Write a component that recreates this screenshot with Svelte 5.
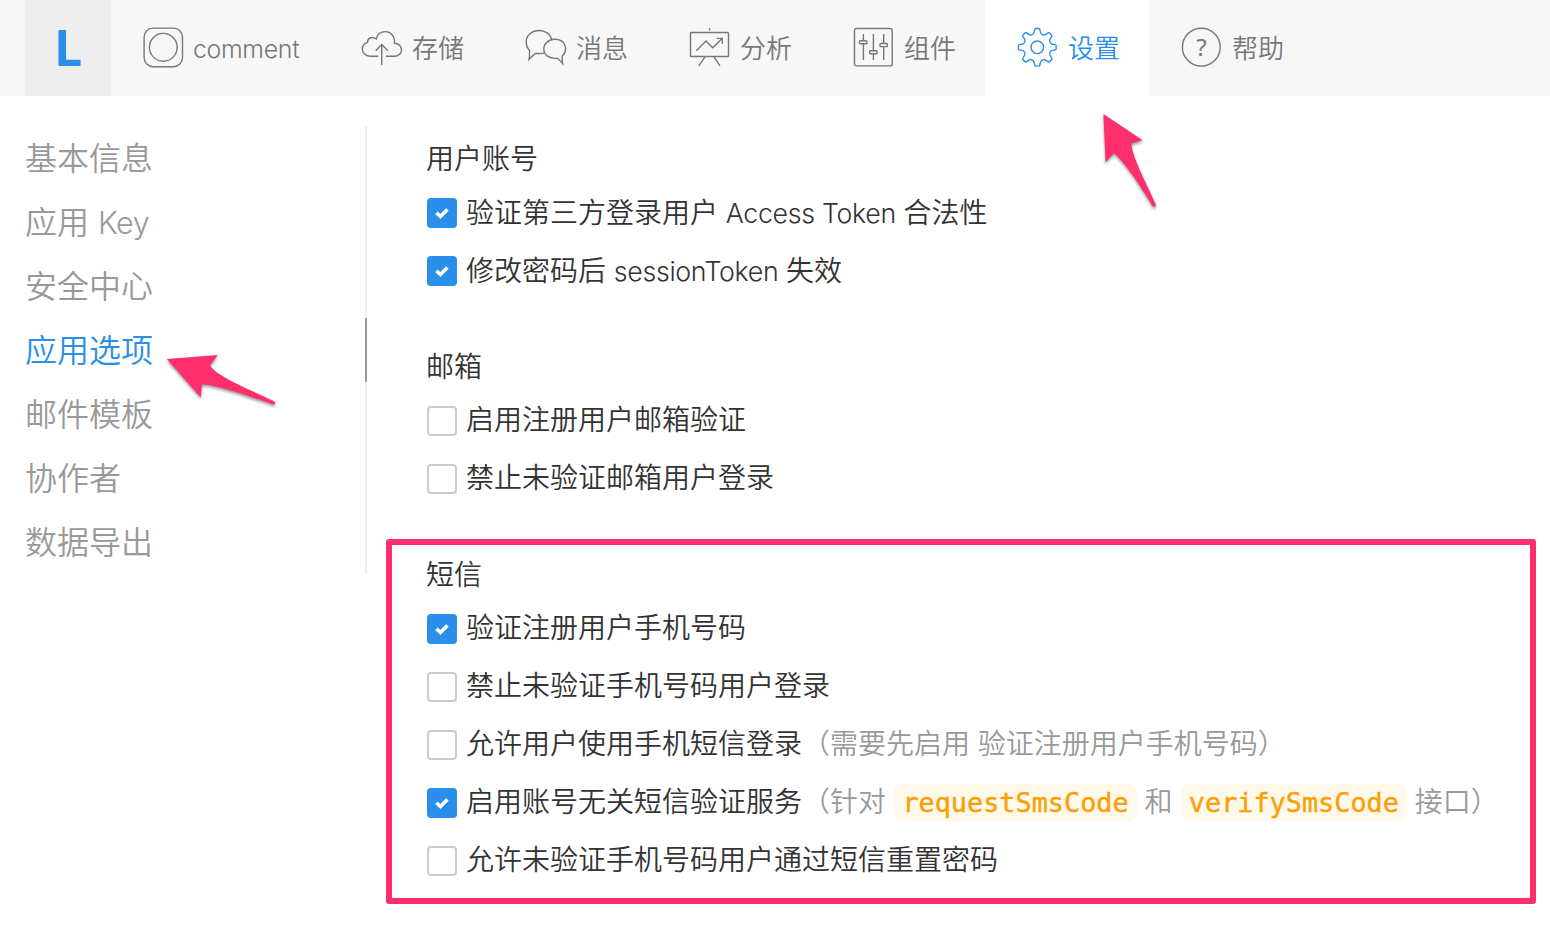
<script>
  const tabs = [
    { icon: 'app', label: 'comment' },
    { icon: 'cloud', label: '存储' },
    { icon: 'chat', label: '消息' },
    { icon: 'board', label: '分析' },
    { icon: 'sliders', label: '组件' },
    { icon: 'gear', label: '设置', active: true },
    { icon: 'help', label: '帮助' },
  ];

  const menu = ['基本信息', '应用 Key', '安全中心', '应用选项', '邮件模板', '协作者', '数据导出'];
  const current = '应用选项';

  const groups = [
    {
      title: '用户账号',
      options: [
        { on: true, label: '验证第三方登录用户 Access Token 合法性' },
        { on: true, label: '修改密码后 sessionToken 失效' },
      ],
    },
    {
      title: '邮箱',
      options: [
        { on: false, label: '启用注册用户邮箱验证' },
        { on: false, label: '禁止未验证邮箱用户登录' },
      ],
    },
    {
      title: '短信',
      options: [
        { on: true, label: '验证注册用户手机号码' },
        { on: false, label: '禁止未验证手机号码用户登录' },
        { on: false, label: '允许用户使用手机短信登录', note: [{ t: '（需要先启用 验证注册用户手机号码）' }] },
        {
          on: true,
          label: '启用账号无关短信验证服务',
          note: [
            { t: '（针对 ' },
            { t: 'requestSmsCode', code: true },
            { t: ' 和 ' },
            { t: 'verifySmsCode', code: true },
            { t: ' 接口）' },
          ],
        },
        { on: false, label: '允许未验证手机号码用户通过短信重置密码' },
      ],
    },
  ];

  // Splits a label into Latin and CJK runs; odd entries are Latin
  const runs = (s) => s.split(/([A-Za-z]+(?: [A-Za-z]+)*)/);

  // Eight-toothed gear outline centred on (20.3, 20.3)
  function gearPath() {
    const c = 20.3;
    const at = (r, deg) => {
      const a = (deg * Math.PI) / 180;
      return `${(c + r * Math.sin(a)).toFixed(2)} ${(c - r * Math.cos(a)).toFixed(2)}`;
    };
    let d = '';
    for (let i = 0; i < 8; i++) {
      const m = i * 45;
      d += `${i ? 'L' : 'M'}${at(18.4, m - 7.6)}Q${at(19, m - 6.8)} ${at(18.9, m - 5)}`;
      d += `L${at(18.9, m + 5)}Q${at(19, m + 6.8)} ${at(18.4, m + 7.6)}`;
      d += `L${at(15.6, m + 11.5)}Q${at(13.6, m + 14)} ${at(13.7, m + 22.5)}`;
      d += `Q${at(13.6, m + 31)} ${at(15.6, m + 33.5)}`;
    }
    return d + 'Z';
  }
</script>

{#snippet mixed(s)}{#each runs(s) as run, i}{#if i % 2}<span class="latin">{run}</span>{:else}{run}{/if}{/each}{/snippet}

<div class="page">
  <header>
    <div class="logo">L</div>
    <nav>
      {#each tabs as tab}
        <div class="tab" class:active={tab.active}>
          <svg class="icon" width="42" height="42" viewBox="0 0 42 42">
            {#if tab.icon === 'app'}
              <rect x="1.1" y="1.1" width="38.4" height="38.6" rx="9" />
              <circle cx="20.3" cy="20.3" r="13.9" />
            {:else if tab.icon === 'cloud'}
              <path d="M17.3 29.2H9C4.6 29.2 1.4 25.9 1.4 22.2C1.4 18.9 3.5 16.3 6.5 15.4C6.5 10.6 12 9 15.2 12C16.2 7.4 19.8 4.6 24.3 4.6C29.6 4.6 34.2 9 33.4 16.2C37.2 16.4 40.5 18.9 40.5 22.8C40.5 26.4 37.6 29.2 34 29.2H25" />
              <path d="M20.7 38V17.6M14.7 23.7L20.7 17.5L27 23.7" />
            {:else if tab.icon === 'chat'}
              <path d="M26.7 12.2C25.3 7 20.3 3.5 14.2 3.5C6.9 3.5 1.2 8.3 1.2 14.6C1.2 18.2 2.3 21.2 4.6 23.5C4.6 27 4.5 30 4.1 32.4C6.3 30 8.3 27.4 11 26.5C14 26.3 16.5 27.1 19.2 26.2" />
              <path d="M37.2 29.2C43.3 23.5 41.1 12.3 29.8 12.3C23.2 12.3 18.8 16.8 18.8 22C18.8 27.8 24 32 32.1 31.3C34.5 32.4 36 34.6 37.6 36.6C37.2 34 37.2 31.6 37.2 29.2Z" />
            {:else if tab.icon === 'board'}
              <rect x="1.5" y="5.5" width="38" height="24" rx="0.8" />
              <path d="M20.6 1.2V3.6M16 29.8L9.8 38.8M25 29.8L31 38.8M7.3 23.7L17 14.1L23.7 20.8L33 11.6M27.7 11.4H33.3V16.7" />
            {:else if tab.icon === 'sliders'}
              <rect x="1.5" y="1.5" width="37.7" height="37.4" rx="2" />
              <path d="M10.4 7V33M20.4 7V33M30.7 7V33" />
              <rect class="knob" x="6.5" y="13.7" width="7.4" height="3.1" rx="0.8" />
              <rect class="knob" x="16.7" y="23.7" width="7.4" height="3.1" rx="0.8" />
              <rect class="knob" x="27" y="16.5" width="7.4" height="3.1" rx="0.8" />
            {:else if tab.icon === 'gear'}
              <path d={gearPath()} />
              <circle cx="20.3" cy="20.3" r="6.3" />
            {:else}
              <circle cx="20.3" cy="20.2" r="18.9" />
              <text x="20.4" y="28.7" text-anchor="middle">?</text>
            {/if}
          </svg>
          <span class="name">{@render mixed(tab.label)}</span>
        </div>
      {/each}
    </nav>
  </header>

  <div class="body">
    <aside>
      {#each menu as item}
        <div class="item" class:current={item === current}>{@render mixed(item)}</div>
      {/each}
    </aside>
    <main>
      {#each groups as group}
        <section>
          <h2>{group.title}</h2>
          {#each group.options as opt}
            <div class="option">
              <span class="box" class:on={opt.on}>
                {#if opt.on}
                  <svg width="30" height="30" viewBox="0 0 30 30"><path d="M9.4 14.8L13.4 18.6L20.4 11.6" /></svg>
                {/if}
              </span>
              <span class="text">{@render mixed(opt.label)}{#if opt.note}<span class="note">{#each opt.note as part}{#if part.code}<code>{part.t}</code>{:else}{part.t}{/if}{/each}</span>{/if}</span>
            </div>
          {/each}
        </section>
      {/each}
    </main>
  </div>

  <div class="frame"></div>
  <svg class="arrows" width="1550" height="926" viewBox="0 0 1550 926">
    <path d="M1103.4 114L1142.8 140.3L1131.6 143.2C1130.6 155 1149 188 1155.4 203.6C1156.4 206.4 1154.6 208.2 1152.8 206.3C1144 192 1127 164.5 1114 153.3L1105.6 162.2Z" />
    <path d="M166.8 359L217.8 355L210 365.6C217 377 255 392 273.6 401C276 402.4 275.4 405 272.8 404.4C257 399 222 386 202 384.3L200.7 397.5Z" />
  </svg>
</div>

<style>
  :global(body) {
    margin: 0;
    background: #fff;
  }
  .page {
    position: relative;
    width: 1550px;
    height: 926px;
    overflow: hidden;
    background: #fff;
    color: #333;
    font-family: 'Liberation Sans', 'Noto Sans CJK SC', sans-serif;
    font-weight: 350;
  }
  .latin {
    font-family: Inter, 'Liberation Sans', sans-serif;
    font-size: 0.955em;
    font-weight: 320;
    letter-spacing: -0.012em;
  }
  header {
    display: flex;
    height: 96px;
    padding-left: 25px;
    background: #f7f7f7;
  }
  .logo {
    width: 86px;
    background: #eee;
    color: #2a8fea;
    font: 700 50px/94px 'Open Sans', sans-serif;
    text-align: center;
  }
  nav {
    display: flex;
  }
  .tab {
    display: flex;
    align-items: center;
    box-sizing: border-box;
    width: 164px;
    padding-left: 32px;
    color: #777;
    font-size: 26px;
    white-space: nowrap;
  }
  .tab:first-child {
    width: 218px;
  }
  .tab.active {
    background: #fff;
    color: #2a8fea;
  }
  .name {
    height: 96px;
    line-height: 98px;
  }
  .icon {
    margin-right: 9px;
    flex: none;
    fill: none;
    stroke: currentColor;
    stroke-width: 1.4;
  }
  .tab:first-child .icon {
    margin-right: 8px;
  }
  .icon text {
    fill: currentColor;
    stroke: none;
    font: 400 24px 'Noto Sans', sans-serif;
  }
  .knob {
    fill: #f7f7f7;
  }
  .body {
    display: flex;
    padding: 30px 0 0 25px;
  }
  aside {
    width: 342px;
    height: 448px;
  }
  .item {
    height: 64px;
    border-right: 2px solid #eee;
    color: #999;
    font-size: 32px;
    line-height: 66px;
  }
  .item.current {
    border-right-color: #999;
    color: #2a8fea;
  }
  main {
    padding-left: 60px;
  }
  section {
    margin-bottom: 34px;
  }
  h2 {
    margin: 0 0 0 -1px;
    height: 58px;
    font-size: 28px;
    font-weight: 350;
    line-height: 67px;
  }
  .option {
    display: flex;
    align-items: center;
    height: 58px;
    font-size: 28px;
    white-space: nowrap;
  }
  .box {
    flex: none;
    box-sizing: border-box;
    width: 30px;
    height: 30px;
    margin-right: 9px;
    border: 2px solid #ccc;
    border-radius: 4px;
  }
  .box.on {
    border: 0;
    background: #2a8fea;
  }
  .box svg {
    display: block;
    fill: none;
    stroke: #fff;
    stroke-width: 3.6;
  }
  .text {
    height: 58px;
    line-height: 58px;
  }
  .note {
    color: #999;
  }
  code {
    margin-left: 0.6px;
    padding: 3px 8px;
    border-radius: 8px;
    background: #fff9eb;
    color: #f9a006;
    font: 400 26.85px 'DejaVu Sans Mono', monospace;
    -webkit-text-stroke: 0.4px #f9a006;
  }
  .frame {
    position: absolute;
    left: 386px;
    top: 539px;
    box-sizing: border-box;
    width: 1150px;
    height: 365px;
    border: 6px solid #ff2f6e;
    border-radius: 3px;
  }
  .arrows {
    position: absolute;
    left: 0;
    top: 0;
    fill: #ff2f6e;
    filter: drop-shadow(0 2px 1.5px rgba(0, 0, 0, 0.4));
    pointer-events: none;
  }
</style>
